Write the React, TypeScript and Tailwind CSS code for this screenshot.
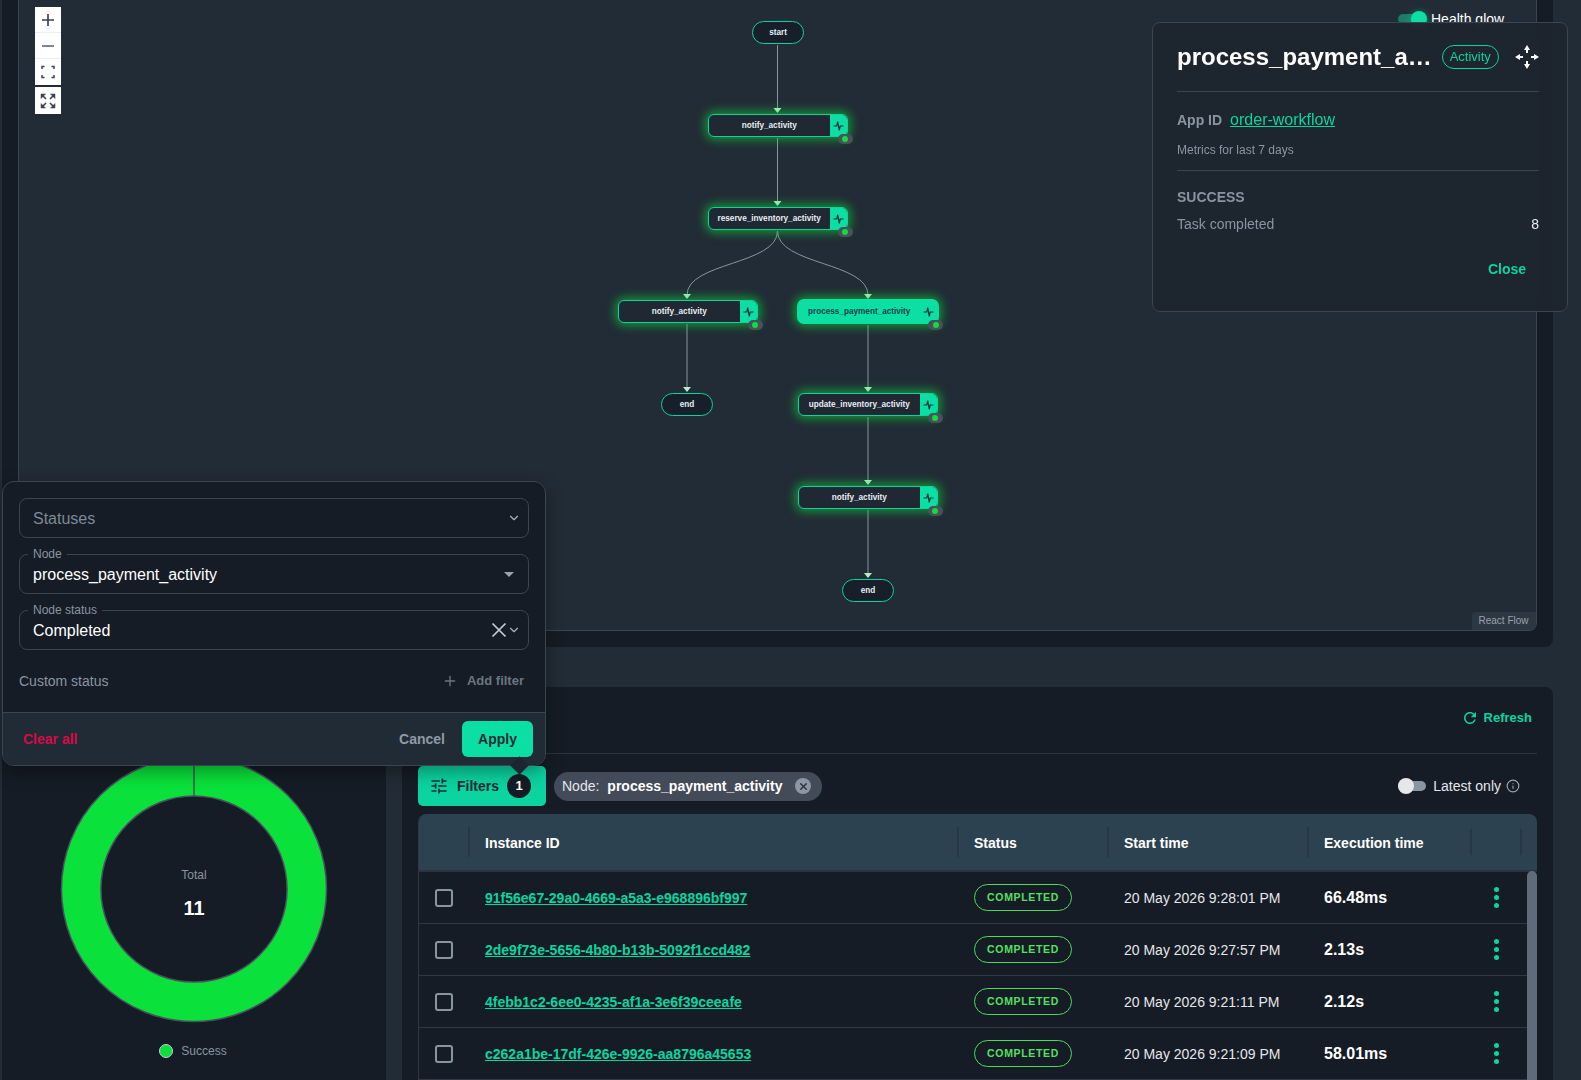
import React from "react";
import { ChevronDown, Info, Plus, X } from "lucide-react";

// graph nodes, coordinates are relative to the canvas
type GraphNode = { label: string; x: number; y: number; selected?: boolean };

const TERMINALS = [
  { label: "start", x: 733, y: 21 },
  { label: "end", x: 642, y: 393 },
  { label: "end", x: 823, y: 579 },
];

const NODES: GraphNode[] = [
  { label: "notify_activity", x: 689, y: 114 },
  { label: "reserve_inventory_activity", x: 689, y: 207 },
  { label: "notify_activity", x: 599, y: 300 },
  { label: "process_payment_activity", x: 778, y: 299, selected: true },
  { label: "update_inventory_activity", x: 779, y: 393 },
  { label: "notify_activity", x: 779, y: 486 },
];

const EDGES = [
  "M758.5 45V109",
  "M758.5 138V202",
  "M758.5 231C758.5 265 668 262 668 295",
  "M758.5 231C758.5 265 849 262 849 295",
  "M668 324V388",
  "M849 325V388",
  "M849 417V481",
  "M849 510V574",
];

const ARROWS = [
  [758.5, 113],
  [758.5, 206],
  [668, 299],
  [849, 299],
  [668, 392],
  [849, 392],
  [849, 485],
  [849, 578],
];

const ROWS = [
  { id: "91f56e67-29a0-4669-a5a3-e968896bf997", start: "20 May 2026 9:28:01 PM", time: "66.48ms" },
  { id: "2de9f73e-5656-4b80-b13b-5092f1ccd482", start: "20 May 2026 9:27:57 PM", time: "2.13s" },
  { id: "4febb1c2-6ee0-4235-af1a-3e6f39ceeafe", start: "20 May 2026 9:21:11 PM", time: "2.12s" },
  { id: "c262a1be-17df-426e-9926-aa8796a45653", start: "20 May 2026 9:21:09 PM", time: "58.01ms" },
];

const COLS = "grid grid-cols-[49px_489px_150px_200px_163px_50px_1fr]";

const PulseIcon = () => (
  <svg width="11" height="12" viewBox="0 0 11 12" fill="none" stroke="#123038" strokeWidth="1.2">
    <path d="M0.5 6H3.8L4.7 1.5L6.3 10.5L7.2 6H10.5" />
  </svg>
);

const TuneIcon = () => (
  <svg width="20" height="20" viewBox="0 0 24 24" fill="currentColor">
    <path d="M3 17v2h6v-2H3zM3 5v2h10V5H3zm10 16v-2h8v-2h-8v-2h-2v6h2zM7 9v2H3v2h4v2h2V9H7zm14 4v-2H11v2h10zm-6-4h2V7h4V5h-4V3h-2v6z" />
  </svg>
);

const RefreshIcon = () => (
  <svg width="18" height="18" viewBox="0 0 24 24" fill="currentColor">
    <path d="M17.65 6.35C16.2 4.9 14.21 4 12 4c-4.42 0-7.99 3.58-7.99 8s3.57 8 7.99 8c3.73 0 6.84-2.55 7.73-6h-2.08c-.82 2.33-3.04 4-5.65 4-3.31 0-6-2.69-6-6s2.69-6 6-6c1.66 0 3.14.69 4.22 1.78L13 11h7V4l-2.35 2.35z" />
  </svg>
);

const StatusPill = ({ className }: { className: string }) => (
  <div className={`absolute flex h-[10px] w-[15px] items-center justify-center rounded-full bg-[#4a505c] ${className}`}>
    <div className="h-[6px] w-[6px] rounded-full bg-[#0ae13a]" />
  </div>
);

const FlowNode = ({ node }: { node: GraphNode }) => {
  if (node.selected) {
    return (
      <div
        className="absolute flex h-[25px] w-[142px] items-center justify-between rounded-[7px] bg-[#0bdfa4] pl-[11px] pr-[5px] text-[8.2px] font-bold text-[#14404a] shadow-[0_0_10px_3px_rgba(10,225,58,0.55)]"
        style={{ left: node.x, top: node.y }}
      >
        <span className="pt-[1px]">{node.label}</span>
        <PulseIcon />
        <StatusPill className="-right-[4px] -bottom-[6px]" />
      </div>
    );
  }
  return (
    <div
      className="absolute flex h-[23px] w-[139.5px] rounded-[6px] border border-[#0bd4a0] bg-[#1f2833] shadow-[0_0_10px_3px_rgba(10,225,58,0.55)]"
      style={{ left: node.x, top: node.y }}
    >
      <div className="flex flex-1 items-center justify-center pt-[1px] text-[8.2px] font-bold text-[#e8edf2]">{node.label}</div>
      <div className="flex w-[17px] items-center justify-center rounded-r-[5px] bg-[#0bdfa4]">
        <PulseIcon />
      </div>
      <StatusPill className="-right-[6px] -bottom-[8px]" />
    </div>
  );
};

const ZoomControls = () => (
  <div className="absolute left-[16px] top-[7px] flex flex-col gap-[2px] text-[#3b4452]">
    <div className="flex flex-col bg-white">
      <div className="flex h-[26px] w-[26px] items-center justify-center border-b border-[#eeeeee]">
        <svg width="14" height="14" viewBox="0 0 14 14" stroke="currentColor" strokeWidth="1.7">
          <path d="M7 1V13M1 7H13" />
        </svg>
      </div>
      <div className="flex h-[26px] w-[26px] items-center justify-center border-b border-[#eeeeee]">
        <svg width="14" height="14" viewBox="0 0 14 14" stroke="currentColor" strokeWidth="1.3">
          <path d="M1 7H13" />
        </svg>
      </div>
      <div className="flex h-[26px] w-[26px] items-center justify-center">
        <svg width="14" height="14" viewBox="0 0 14 14" fill="none" stroke="currentColor" strokeWidth="1.5">
          <path d="M1 4V1.5H3.5M10.5 1.5H13V4M13 10V12.5H10.5M3.5 12.5H1V10" />
        </svg>
      </div>
    </div>
    <div className="flex h-[27px] w-[26px] items-center justify-center bg-white">
      <svg width="16" height="16" viewBox="0 0 16 16" fill="currentColor" stroke="currentColor">
        <path d="M1 1H5.5L1 5.5ZM15 1H10.5L15 5.5ZM1 15H5.5L1 10.5ZM15 15H10.5L15 10.5Z" strokeWidth="0.5" />
        <path d="M2.5 2.5L6 6M13.5 2.5L10 6M2.5 13.5L6 10M13.5 13.5L10 10" strokeWidth="1.6" fill="none" />
      </svg>
    </div>
  </div>
);

const Canvas = () => (
  <div className="relative h-[631px] overflow-hidden rounded-br-lg border-x border-b border-[#3a4552] bg-[#222c36]">
    <ZoomControls />
    <svg className="absolute left-0 top-0" width="1519" height="631" fill="none">
      {EDGES.map((d) => (
        <path key={d} d={d} stroke="#87959c" strokeWidth="1" />
      ))}
      {ARROWS.map(([x, y]) => (
        <path key={`${x}-${y}`} d={`M${x - 4} ${y - 5}H${x + 4}L${x} ${y}Z`} fill="#b7ecc8" />
      ))}
    </svg>
    {TERMINALS.map((t) => (
      <div
        key={`${t.label}-${t.x}`}
        className="absolute flex h-[23px] w-[52px] items-center justify-center rounded-full border border-[#0bd4a0] bg-[#17202a] pt-[1px] text-[8.2px] font-bold text-[#e8edf2]"
        style={{ left: t.x, top: t.y }}
      >
        {t.label}
      </div>
    ))}
    {NODES.map((n) => (
      <FlowNode key={`${n.label}-${n.x}-${n.y}`} node={n} />
    ))}
    <div className="absolute left-[1379px] top-[10px] flex items-center gap-[5px]">
      <div className="relative h-[10px] w-[28px] rounded-full bg-[#1d7a66]">
        <div className="absolute -top-[3px] right-[-1px] h-[16px] w-[16px] rounded-full bg-[#0bdfa4] shadow-[0_2px_8px_rgba(11,223,164,0.6)]" />
      </div>
      <span className="pt-[1px] text-sm leading-4 text-white">Health glow</span>
    </div>
    <div className="absolute bottom-0 right-0 flex h-[18px] w-[64px] items-center justify-center rounded-tl bg-[#2d3742] pb-[1px] pr-[1px] text-[10px] text-[#98a2ad]">
      React Flow
    </div>
  </div>
);

const MoveIcon = () => (
  <svg width="26" height="26" viewBox="0 0 26 26" fill="white" stroke="white" strokeWidth="2" className="shrink-0">
    <path d="M13 1L16 6H10ZM13 25L16 20H10ZM1 13L6 10V16ZM25 13L20 10V16Z" strokeWidth="0" />
    <path d="M13 5V9M13 17V21M5 13H9M17 13H21" fill="none" />
  </svg>
);

const DetailPanel = () => (
  <div className="absolute left-[1152px] top-[22px] h-[290px] w-[416px] rounded-lg border border-[#3a4552] bg-[#1e252e]/95 pl-[24px] pr-[28px] pt-[17px] backdrop-blur-sm">
    <div className="flex items-center border-b border-[#3a4552] pb-[17px]">
      <div className="flex-1 whitespace-nowrap text-2xl font-bold leading-[34px] text-white">process_payment_a…</div>
      <div className="ml-[10px] flex h-[24px] w-[57px] shrink-0 items-center justify-center rounded-full border border-[#0bd4a0] text-[13px] text-[#0bd4a0]">
        Activity
      </div>
      <div className="ml-[15px]">
        <MoveIcon />
      </div>
    </div>
    <div className="mt-[16px] flex items-baseline gap-2">
      <span className="text-sm font-bold text-[#8a95a2]">App ID</span>
      <span className="text-base text-[#0bd4a0] underline">order-workflow</span>
    </div>
    <div className="mt-[10px] border-b border-[#3a4552] pb-[12px] text-xs text-[#8a95a2]">Metrics for last 7 days</div>
    <div className="mt-[16px] text-sm font-bold text-[#8a95a2]">SUCCESS</div>
    <div className="mt-[7px] flex justify-between text-sm">
      <span className="text-[#8a95a2]">Task completed</span>
      <span className="text-[#e8edf2]">8</span>
    </div>
    <div className="mt-[25px] pr-[13px] text-right text-sm font-bold text-[#0bd4a0]">Close</div>
  </div>
);

const Field = ({ label, children }: { label?: string; children: React.ReactNode }) => (
  <div className="relative flex h-[40px] items-center rounded-lg border border-[#3a4552] pl-[13px] pr-[7px] text-base">
    {label && (
      <span className="absolute -top-[8px] left-[8px] bg-[#151c25] px-[5px] text-xs leading-[14px] text-[#8a95a2]">{label}</span>
    )}
    {children}
  </div>
);

const FilterPopup = () => (
  <div className="absolute left-[2px] top-[481px] w-[544px] rounded-xl border border-[#3a4552] bg-[#151c25] shadow-[0_6px_18px_rgba(0,0,0,0.35)]">
    <div className="flex flex-col gap-[16px] px-[16px] pt-[16px]">
      <Field>
        <span className="flex-1 pt-[1px] text-[#7e8995]">Statuses</span>
        <ChevronDown size={14} className="text-[#aab3bc]" />
      </Field>
      <Field label="Node">
        <span className="flex-1 pt-[1px] text-white">process_payment_activity</span>
        <div className="mr-[7px] h-0 w-0 border-x-[5px] border-t-[5px] border-x-transparent border-t-[#9aa4af]" />
      </Field>
      <Field label="Node status">
        <span className="flex-1 pt-[1px] text-white">Completed</span>
        <svg width="16" height="16" viewBox="0 0 16 16" stroke="#c5ccd3" strokeWidth="1.7">
          <path d="M1.5 1.5L14.5 14.5M14.5 1.5L1.5 14.5" />
        </svg>
        <ChevronDown size={14} className="text-[#aab3bc]" />
      </Field>
    </div>
    <div className="mb-[15px] mt-[15px] flex h-[32px] items-center justify-between px-[16px]">
      <span className="text-sm text-[#8a95a2]">Custom status</span>
      <div className="flex items-center gap-[9px] pr-[5px] text-[13px] font-bold text-[#6b7580]">
        <Plus size={16} />
        Add filter
      </div>
    </div>
    <div className="flex h-[53px] items-center justify-between rounded-b-xl border-t border-[#3a4552] bg-[#212b36] pl-[20px] pr-[12px]">
      <span className="text-sm font-bold text-[#d80a45]">Clear all</span>
      <div className="flex items-center gap-[17px]">
        <span className="text-sm font-bold text-[#8f9aa5]">Cancel</span>
        <div className="flex h-[36px] w-[71px] items-center justify-center rounded-md bg-[#0bdfa4] text-sm font-bold text-[#1d2b36]">
          Apply
        </div>
      </div>
    </div>
    <div className="absolute -bottom-[7px] left-[510px] h-[13px] w-[13px] rotate-45 bg-[#1c2530]" />
  </div>
);

const Donut = () => (
  <div className="relative h-[268px] w-[268px]">
    <svg width="268" height="268" viewBox="0 0 268 268" fill="none">
      <circle cx="134" cy="134" r="112.8" stroke="#4a4f5e" strokeWidth="41" />
      <circle cx="134" cy="134" r="112.8" stroke="#0ae13a" strokeWidth="38" />
      <path d="M134 1V41" stroke="#4a4f5e" strokeWidth="1.5" />
    </svg>
    <div className="absolute inset-0 flex flex-col items-center justify-center pt-[9px]">
      <span className="text-xs text-[#8a95a2]">Total</span>
      <span className="mt-[13px] text-xl font-bold leading-6 text-white">11</span>
    </div>
  </div>
);

const Table = () => (
  <div className="relative mt-[8px] overflow-hidden rounded-t-lg border-l border-[#2b3845]">
    <div className={`${COLS} h-[56px] items-center bg-[#2c4250] text-sm font-bold text-white`}>
      <div />
      <div className="border-l-2 border-[#273845] pb-[4px] pl-[15px] pt-[6px]">Instance ID</div>
      <div className="border-l-2 border-[#273845] pb-[4px] pl-[15px] pt-[6px]">Status</div>
      <div className="border-l-2 border-[#273845] pb-[4px] pl-[15px] pt-[6px]">Start time</div>
      <div className="border-l-2 border-[#273845] pb-[4px] pl-[15px] pt-[6px]">Execution time</div>
      <div className="h-[26px] border-l-2 border-[#273845]" />
      <div className="h-[26px] border-l-2 border-[#273845]" />
    </div>
    <div className="h-[2px] bg-[#2a3440]" />
    {ROWS.map((row) => (
      <div key={row.id} className={`${COLS} h-[52px] items-center border-b border-[#2b3845]`}>
        <div className="flex justify-center pl-[1px]">
          <div className="h-[18px] w-[18px] rounded-[3px] border-2 border-[#8a95a2]" />
        </div>
        <div className="pl-[17px] text-sm font-bold text-[#0bd4a0] underline">{row.id}</div>
        <div className="pl-[17px]">
          <div className="flex h-[27px] w-[98px] items-center justify-center rounded-full border border-[#4ade5a] text-[10.5px] font-bold tracking-[0.65px] text-[#55e063]">
            COMPLETED
          </div>
        </div>
        <div className="pl-[17px] text-sm text-[#e5e7eb]">{row.start}</div>
        <div className="pl-[17px] text-base font-bold text-white">{row.time}</div>
        <div className="flex flex-col items-center gap-[3px] pl-[3px]">
          <div className="h-[5px] w-[5px] rounded-full bg-[#0bd4a0]" />
          <div className="h-[5px] w-[5px] rounded-full bg-[#0bd4a0]" />
          <div className="h-[5px] w-[5px] rounded-full bg-[#0bd4a0]" />
        </div>
        <div />
      </div>
    ))}
    <div className="absolute bottom-0 right-0 top-[57px] w-[10px] rounded-t-md bg-[#5e6b7a]" />
  </div>
);

const App = () => {
  return (
    <div className="relative h-screen w-full overflow-hidden bg-[#222c36] pl-[2px] pr-[28px] font-['Liberation_Sans',Arial,sans-serif]">
      <div className="h-[647px] rounded-b-lg bg-[#151c25] px-[16px]">
        <Canvas />
      </div>
      <div className="mt-[40px] flex h-[393px] gap-[16px]">
        <div className="flex w-[384px] shrink-0 flex-col items-center rounded-t-lg bg-[#151c25] pt-[68px]">
          <Donut />
          <div className="mt-[20px] flex items-center gap-[8px] pr-[2px] text-xs text-[#8a95a2]">
            <div className="h-[14px] w-[14px] rounded-full border border-[#c9d0d6] bg-[#0ae13a]" />
            Success
          </div>
        </div>
        <div className="min-w-0 flex-1 rounded-t-lg bg-[#151c25] px-[16px]">
          <div className="flex h-[67px] items-center justify-end border-b border-[#2b3540] pb-[4px] pr-[5px]">
            <div className="flex items-center gap-[5px] text-[13px] font-bold text-[#0bd4a0]">
              <RefreshIcon />
              Refresh
            </div>
          </div>
          <div className="mt-[12px] flex h-[40px] items-center">
            <div className="flex h-[40px] w-[128px] items-center rounded-[5px] bg-[#0bd4a0] pl-[11px] text-sm font-bold text-[#1d2b36]">
              <TuneIcon />
              <span className="ml-[8px]">Filters</span>
              <div className="ml-[8px] flex h-[24px] w-[24px] items-center justify-center rounded-full bg-[#151c25] text-[13px] text-white">
                1
              </div>
            </div>
            <div className="ml-[8px] flex h-[29px] items-center rounded-full bg-[#434b58] pl-[8px] pr-[11px] text-sm text-[#e5e7eb]">
              Node:
              <span className="ml-[8px] font-bold text-white">process_payment_activity</span>
              <div className="ml-[13px] flex h-[16px] w-[16px] items-center justify-center rounded-full bg-[#8d97a3] text-[#2a3340]">
                <X size={11} strokeWidth={3} />
              </div>
            </div>
            <div className="ml-auto flex items-center pr-[17px] text-sm text-[#e5e7eb]">
              <div className="relative h-[10px] w-[28px] rounded-full bg-[#8a95a2]">
                <div className="absolute -top-[3px] left-0 h-[16px] w-[16px] rounded-full bg-[#e5e7eb]" />
              </div>
              <span className="ml-[7px]">Latest only</span>
              <Info size={14} className="ml-[5px] text-[#9aa4af]" />
            </div>
          </div>
          <Table />
        </div>
      </div>
      <DetailPanel />
      <FilterPopup />
    </div>
  );
};

export default App;
